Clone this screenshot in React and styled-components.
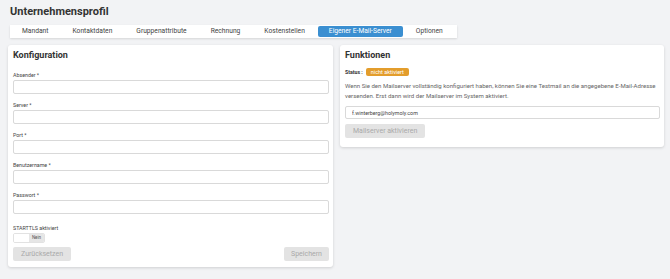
import styled, {createGlobalStyle} from "styled-components";

const GlobalStyle = createGlobalStyle`
  body {
    margin: 0;
    background: #f2f3f5;
    font-family: Roboto, "Liberation Sans", sans-serif;
    color: #333;
  }
`;

const Page = styled.div`
  width: 670px;
  height: 279px;
  overflow: hidden;
`;

const Title = styled.h1`
  margin: 0;
  padding: 5px 0 0 10px;
  height: 25px;
  box-sizing: border-box;
  font-size: 11px;
  line-height: 14px;
  font-weight: 700;
  color: #333;
`;

const TabBar = styled.div`
  margin-left: 10px;
  width: 447px;
  height: 13px;
  background: #fff;
  display: flex;
  align-items: center;
  gap: 2px;
  padding: 0 1px;
  box-sizing: border-box;
  box-shadow: 0 1px 2px rgba(0, 0, 0, 0.12);
`;

const Tab = styled.div`
  font-size: 6.7px;
  line-height: 11px;
  height: 11px;
  padding: 0 11px;
  border-radius: 2px;
  white-space: nowrap;
  color: ${p => p.$active ? "#fff" : "#444"};
  background: ${p => p.$active ? "#3b8fd1" : "transparent"};
`;

const Content = styled.div`
  display: flex;
  align-items: flex-start;
  gap: 7px;
  padding: 7px 0 0 8px;
`;

const Panel = styled.div`
  width: ${p => p.$width}px;
  background: #fff;
  border-radius: 3px;
  box-shadow: 0 1px 3px rgba(0, 0, 0, 0.15);
  padding: 4px 4px ${p => p.$bottom || 6}px 5px;
  box-sizing: border-box;
`;

const PanelTitle = styled.h2`
  margin: 0;
  font-size: 9px;
  line-height: 12px;
  font-weight: 700;
  color: #333;
`;

const Fields = styled.div`
  display: flex;
  flex-direction: column;
  gap: 7px;
  margin-top: 10px;
`;

const Field = styled.div`
  display: flex;
  flex-direction: column;
`;

const Label = styled.label`
  font-size: 5.3px;
  line-height: 8px;
  margin-bottom: 1px;
  color: #444;
`;

const Input = styled.input`
  display: block;
  height: ${p => p.$h || 14}px;
  box-sizing: border-box;
  border: 1px solid #d9d9d9;
  border-radius: 2px;
  font-family: inherit;
  font-size: 5.3px;
  padding: 0 6px;
  color: #444;
  outline: none;
  width: 100%;
`;

const Toggle = styled.div`
  display: flex;
  width: 32px;
  height: 10px;
  border: 1px solid #e2e2e2;
  border-radius: 2px;
  box-sizing: border-box;
  overflow: hidden;
`;

const ToggleKnob = styled.div`
  flex: 1;
  background: #fff;
`;

const ToggleText = styled.div`
  width: 15px;
  background: #e6e6e6;
  font-size: 4.5px;
  line-height: 8px;
  text-align: center;
  color: #555;
`;

const ButtonRow = styled.div`
  display: flex;
  justify-content: space-between;
  margin-top: 4px;
`;

const Button = styled.button`
  display: block;
  height: 14px;
  padding: 0 ${p => p.$pad || 6}px;
  border: none;
  border-radius: 2px;
  background: #e3e3e3;
  color: #a9a9a9;
  font-family: inherit;
  font-size: 7px;
  line-height: 14px;
`;

const StatusRow = styled.div`
  display: flex;
  align-items: center;
  gap: 3px;
  margin-top: 7px;
  font-size: 5.2px;
  font-weight: 700;
  color: #333;
`;

const Badge = styled.span`
  background: #e39d2c;
  color: #fff;
  font-size: 5.5px;
  font-weight: 400;
  line-height: 8px;
  padding: 0 5px;
  border-radius: 2px;
`;

const Text = styled.p`
  margin: 5px 0 5px;
  font-size: 6.05px;
  line-height: 10px;
  color: #666;
`;

const ActivateButton = styled(Button)`
  margin-top: 5px;
`;

const fields = ["Absender *", "Server *", "Port *", "Benutzername *", "Passwort *"];
const tabs = ["Mandant", "Kontaktdaten", "Gruppenattribute", "Rechnung", "Kostenstellen", "Eigener E-Mail-Server", "Optionen"];

const App = () => {
  return (
    <Page>
      <GlobalStyle/>
      <Title>Unternehmensprofil</Title>
      <TabBar>
        {tabs.map(t => <Tab key={t} $active={t === "Eigener E-Mail-Server"}>{t}</Tab>)}
      </TabBar>
      <Content>
        <Panel $width={325}>
          <PanelTitle>Konfiguration</PanelTitle>
          <Fields>
            {fields.map(f =>
              <Field key={f}>
                <Label>{f}</Label>
                <Input type={f.startsWith("Passwort") ? "password" : "text"}/>
              </Field>
            )}
            <Field style={{marginTop: 3}}>
              <Label>STARTTLS aktiviert</Label>
              <Toggle>
                <ToggleKnob/>
                <ToggleText>Nein</ToggleText>
              </Toggle>
            </Field>
          </Fields>
          <ButtonRow>
            <Button $pad={8}>Zurücksetzen</Button>
            <Button $pad={7}>Speichern</Button>
          </ButtonRow>
        </Panel>
        <Panel $width={324} $bottom={9}>
          <PanelTitle>Funktionen</PanelTitle>
          <StatusRow>Status : <Badge>nicht aktiviert</Badge></StatusRow>
          <Text>
            Wenn Sie den Mailserver vollständig konfiguriert haben, können Sie eine Testmail an die angegebene E-Mail-Adresse
            versenden. Erst dann wird der Mailserver im System aktiviert.
          </Text>
          <Input $h={13} defaultValue="f.winterberg@holymoly.com"/>
          <ActivateButton $pad={8}>Mailserver aktivieren</ActivateButton>
        </Panel>
      </Content>
    </Page>
  )
}

export default App
